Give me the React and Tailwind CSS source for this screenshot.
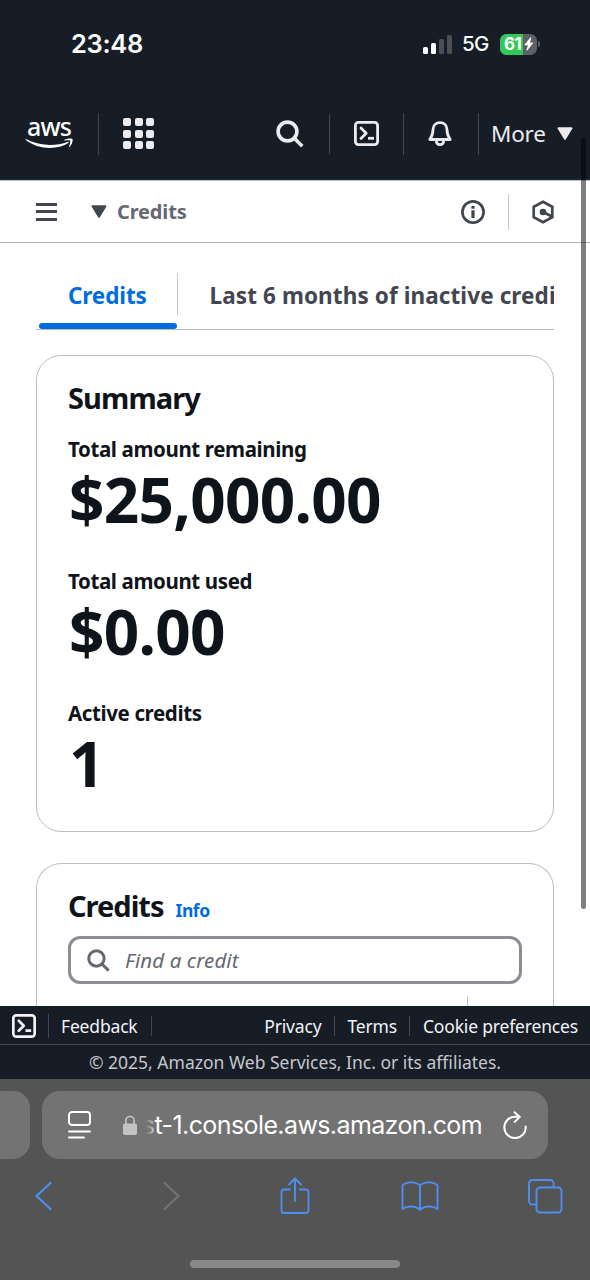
import { Fragment } from 'react'

const NAVY = 'bg-[#161d26]'

/* ---------- Icons ---------- */

function AwsLogo() {
  return (
    <div className="w-[48px] h-[36px] flex flex-col items-center text-white">
      <span className="font-['Noto_Sans'] font-medium text-[25px] leading-[20px] mb-[2px] tracking-[-0.9px]">aws</span>
      <svg viewBox="0 0 48 12" className="w-[48px] h-[12px] shrink-0" fill="currentColor">
        <path d="M.5 1.800C.1 1.300.7.9 1.400 1.300 14.200 8 30.500 8.600 42.600 4c1.100-.5 1.700.4.7 1.100C31.500 12.600 12.500 11.500.5 1.800z" />
        <path d="M39.300 1.900C41.500.5 46.500 0 47.400.9c.8 1.100-.3 5.900-2.700 7.900-.5.4-.9.200-.7-.4.7-1.600 1.600-4.900 1.100-5.600-.5-.7-3.500-.4-5.100-.2-.7.1-1.300-.3-.7-.7z" />
      </svg>
    </div>
  )
}

function AppsIcon() {
  return (
    <div className="grid grid-cols-3 gap-[3.5px] w-[31px]">
      {Array.from({ length: 9 }).map((_, i) => (
        <span key={i} className="size-[8px] rounded-[2px] bg-[#ebebf0]" />
      ))}
    </div>
  )
}

function SearchIcon({ className }) {
  return (
    <svg viewBox="0 0 28 28" className={className} fill="none" stroke="currentColor" strokeWidth="3.600">
      <circle cx="11.500" cy="11.500" r="9.400" />
      <path d="M18.300 18.300l8 8" />
    </svg>
  )
}

function TerminalIcon({ className }) {
  return (
    <svg viewBox="0 0 25 25" className={className} fill="none" stroke="currentColor" strokeWidth="2.800" strokeLinejoin="round">
      <rect x="1.400" y="1.400" width="22.200" height="22.200" rx="3" />
      <path d="M7 7l5.200 5.200L7 17.400" strokeLinecap="round" />
      <path d="M14 17.300h6" />
    </svg>
  )
}

function BellIcon() {
  return (
    <svg viewBox="0 0 24 26" className="w-[24px] h-[26px]" fill="none" stroke="currentColor" strokeWidth="2.800" strokeLinejoin="round">
      <path d="M12 1.700C7.800 1.700 5 4.800 5 8.800c0 4.700-1.200 7-3.200 9.700h20.400C20.200 15.800 19 13.500 19 8.800c0-4-2.800-7.100-7-7.100z" />
      <path d="M8.300 19c0 2.800 1.500 4.600 3.700 4.600s3.700-1.800 3.700-4.600" />
    </svg>
  )
}

function Caret({ className }) {
  return (
    <svg viewBox="0 0 16 13" className={className} fill="currentColor">
      <path d="M1.500.3h13c.9 0 1.300.8.8 1.500L8.900 12.200c-.4.700-1.400.7-1.800 0L.7 1.800C.2 1.100.6.3 1.500.3z" />
    </svg>
  )
}

function InfoIcon() {
  return (
    <svg viewBox="0 0 24 24" className="size-[24px]" fill="none" stroke="currentColor" strokeWidth="2.700">
      <circle cx="12" cy="12" r="10.600" />
      <path d="M12 10.300v7.600M12 5.900v2.800" strokeWidth="3.200" />
    </svg>
  )
}

function HexIcon() {
  return (
    <svg viewBox="0 0 22 24" className="w-[22px] h-[24px]" fill="none" stroke="currentColor" strokeWidth="2.700">
      <path d="M11 1.700l9.300 5.200v10.200L11 22.300l-9.300-5.200V6.900z" />
      <circle cx="11" cy="12" r="3.300" fill="currentColor" stroke="none" />
      <path d="M11 12l8.500 4.300" />
    </svg>
  )
}

function BatteryIcon() {
  return (
    <div className="flex items-center">
      <div className="relative w-[37px] h-[21px] rounded-[6.500px] overflow-hidden bg-[#5d6066]">
        <div className="w-[23px] h-full bg-[#34c759]" />
        <div className="absolute inset-0 flex items-center pl-[4px]">
          <span className="w-[20px] font-['Inter'] font-bold text-[17px] leading-[21px] tracking-[-0.5px] text-white">61</span>
          <svg viewBox="0 0 10 14" className="w-[10px] h-[14px]" fill="white">
            <path d="M6.400.4L.6 7.600c-.3.400-.1.700.3.700h3L2.500 13c-.2.700.3.900.7.400l6-7.300c.3-.4.1-.7-.3-.7H6L7.200.9c.2-.7-.4-1-.8-.5z" />
          </svg>
        </div>
      </div>
      <div className="ml-[1px] w-[2px] h-[6px] rounded-r-full bg-[#5d6066]" />
    </div>
  )
}

/* ---------- Page sections ---------- */

const BARS = ['h-[7px] bg-white', 'h-[11px] bg-white', 'h-[15px] bg-[#4a4f56]', 'h-[19px] bg-[#4a4f56]']

function StatusBar() {
  return (
    <div className="h-[88px] flex items-center pl-[71px] pr-[50px] text-white font-['Inter']">
      <span className="text-[25.500px] font-semibold tracking-[-0.3px] leading-[88px]">23:48</span>
      <div className="ml-auto flex items-center">
        <div className="flex items-end gap-[3px] h-[19px]">
          {BARS.map((bar) => (
            <span key={bar} className={`w-[5px] rounded-[1.500px] ${bar}`} />
          ))}
        </div>
        <span className="ml-[10px] w-[28px] text-[20.500px] font-medium tracking-[-0.6px]">5G</span>
        <div className="ml-[10px]"><BatteryIcon /></div>
      </div>
    </div>
  )
}

function Header() {
  return (
    <header className="h-[91px] flex items-center text-[#ebebf0] pl-[25px]">
      <AwsLogo />
      <i className="ml-[25px] w-px h-[42px] bg-[#424650]" />
      <div className="ml-[24px]"><AppsIcon /></div>
      <SearchIcon className="ml-[122px] size-[28px]" />
      <i className="ml-[25px] w-px h-[40px] bg-[#424650]" />
      <TerminalIcon className="ml-[24px] size-[25px]" />
      <i className="ml-[24px] w-px h-[42px] bg-[#424650]" />
      <div className="ml-[24px]"><BellIcon /></div>
      <i className="ml-[26px] w-px h-[42px] bg-[#424650]" />
      <span className="ml-[12px] w-[66px] text-[22.500px] tracking-[-0.2px]">More</span>
      <Caret className="w-[16px] h-[13px]" />
    </header>
  )
}

function Breadcrumb() {
  return (
    <nav className="h-[63px] shrink-0 flex items-center border-t border-t-[#b6bec9] border-b border-b-[#b0b0b6] pl-[36px] text-[#424650]">
      <div className="w-[21px] flex flex-col gap-[4.500px]">
        <i className="h-[3px] bg-[#424650]" />
        <i className="h-[3px] bg-[#424650]" />
        <i className="h-[3px] bg-[#424650]" />
      </div>
      <Caret className="ml-[34px] w-[16px] h-[13px]" />
      <span className="ml-[10px] w-[344px] text-[20px] font-bold tracking-[-0.15px] text-[#656871]">Credits</span>
      <InfoIcon />
      <i className="ml-[23px] w-px h-[36px] bg-[#c6c6cd]" />
      <div className="ml-[23px]"><HexIcon /></div>
    </nav>
  )
}

function Tabs() {
  return (
    <div className="mx-[36px] h-[87px] shrink-0 flex items-stretch border-b border-[#b8b8bf] overflow-hidden text-[22.500px] font-bold whitespace-nowrap">
      <div className="ml-[3px] w-[138px] shrink-0 flex flex-col">
        <span className="h-[80px] pl-[29px] pt-[35px] leading-[35px] tracking-[-0.1px] text-[#006ce0]">Credits</span>
        <i className="h-[6px] rounded-full bg-[#006ce0]" />
      </div>
      <i className="w-px h-[42px] mt-[30px] shrink-0 bg-[#c6c6cd]" />
      <span className="ml-[31.500px] pt-[35px] leading-[35px] tracking-[0.1px] text-[#424650]">Last 6 months of inactive credits</span>
    </div>
  )
}

const STATS = [
  { label: 'Total amount remaining', value: '$25,000.00' },
  { label: 'Total amount used', value: '$0.00' },
  { label: 'Active credits', value: '1' },
]

function Summary() {
  return (
    <section className="mx-[36px] mt-[25px] h-[477px] shrink-0 rounded-[25px] border border-[#bcbcc2] pl-[31px] pt-[23px] text-[#0f141a]">
      <h2 className="text-[29px] leading-[38px] font-bold tracking-[-0.9px]">Summary</h2>
      {STATS.map((s) => (
        <div key={s.label} className="h-[132px] pt-[17px]">
          <div className="text-[20.500px] leading-[30px] font-bold tracking-[-0.38px]">{s.label}</div>
          <div className="pl-px text-[62px] leading-[71px] font-bold tracking-[-0.7px]">{s.value}</div>
        </div>
      ))}
    </section>
  )
}

function CreditsTable() {
  return (
    <section className="mx-[36px] mt-[31px] h-[143px] shrink-0 rounded-t-[25px] border border-b-0 border-[#bcbcc2] px-[31px] pt-[23px]">
      <div className="flex items-baseline h-[49px]">
        <h2 className="text-[29px] leading-[38px] font-bold tracking-[-1px] text-[#0f141a]">Credits</h2>
        <a className="ml-[12px] text-[17.500px] font-bold tracking-[-0.4px] text-[#006ce0]">Info</a>
      </div>
      <div className="h-[48px] flex items-center rounded-[12px] border-[3px] border-[#8c8c94] pl-[16px] text-[#656871]">
        <SearchIcon className="size-[23px]" />
        <span className="ml-[15px] text-[20.500px] leading-[40px] italic tracking-[0.1px]">Find a credit</span>
      </div>
      <i className="block ml-auto mr-[54px] mt-[12px] w-px h-[10px] bg-[#bcbcc2]" />
    </section>
  )
}

const LINKS = ['Privacy', 'Terms', 'Cookie preferences']

function Footer() {
  return (
    <footer className={`${NAVY} h-[73px] shrink-0 text-[#f3f3f7]`}>
      <div className="h-[39px] flex items-center border-b border-[#424650] pt-[2px] pl-[12px] pr-[12px] text-[17.500px] tracking-[-0.17px]">
        <TerminalIcon className="size-[24px]" />
        <i className="ml-[12px] w-px h-[24px] bg-[#424650]" />
        <span className="ml-[12px] w-[90px]">Feedback</span>
        <i className="w-px h-[20px] bg-[#424650]" />
        <div className="ml-auto flex items-center">
          {LINKS.map((link, i) => (
            <Fragment key={link}>
              {i > 0 && <i className="mx-[12.500px] w-px h-[20px] bg-[#424650]" />}
              <span>{link}</span>
            </Fragment>
          ))}
        </div>
      </div>
      <p className="text-center text-[17.500px] leading-[34px] text-[#c6c6cd]">
        © 2025, Amazon Web Services, Inc. or its affiliates.
      </p>
    </footer>
  )
}

function AddressBar() {
  return (
    <div className="h-[68px] mt-[12px] flex">
      <div className="w-[30px] rounded-r-[17px] bg-[#737373]" />
      <div className="ml-[12px] w-[506px] rounded-[18px] bg-[#737373] flex items-center pl-[25px] text-white">
        <svg viewBox="0 0 25 28" className="w-[25px] h-[28px]" fill="none" stroke="currentColor" strokeWidth="1.900" strokeLinecap="round">
          <rect x="2" y="1" width="21" height="13" rx="3" />
          <path d="M2 20.500h21M2 26.500h15" />
        </svg>
        <svg viewBox="0 0 14 20" className="ml-[31px] w-[14px] h-[20px] text-[#c3c3c6]" fill="currentColor">
          <rect y="8.500" width="14" height="11.500" rx="2" />
          <path d="M3 9V5.500a4 4 0 0 1 8 0V9" fill="none" stroke="currentColor" strokeWidth="1.700" />
        </svg>
        <div className="w-[345px] pt-[2px] flex justify-end font-['Inter'] text-[25px] tracking-[-0.6px] whitespace-nowrap">
          {/* the host fades out on the left */}
          <span className="bg-linear-to-r from-transparent from-30% to-white/70 bg-clip-text text-transparent">s</span>
          <span>t-1.console.aws.amazon.com</span>
        </div>
        <svg viewBox="0 0 24 28" className="ml-[21px] w-[24px] h-[28px]" fill="none" stroke="currentColor" strokeWidth="2" strokeLinecap="round" strokeLinejoin="round">
          <path d="M22.700 15.500A10.700 10.700 0 1 1 12 5.700h4.500" />
          <path d="M11.500 1.200l5.200 4.700-5 5" />
        </svg>
      </div>
    </div>
  )
}

function Toolbar() {
  return (
    <div className="h-[74px] flex items-center pl-[34px] text-[#4d8ff0]">
      <svg viewBox="0 0 18 30" className="w-[18px] h-[30px]" fill="none" stroke="currentColor" strokeWidth="2.200" strokeLinecap="round">
        <path d="M16.500 2L2.500 15l14 13" />
      </svg>
      <svg viewBox="0 0 18 30" className="ml-[110px] w-[18px] h-[30px] text-[#747474]" fill="none" stroke="currentColor" strokeWidth="2.200" strokeLinecap="round">
        <path d="M2.500 2l14 13-14 13" />
      </svg>
      <svg viewBox="0 0 30 38" className="ml-[100px] w-[30px] h-[38px]" fill="none" stroke="currentColor" strokeWidth="1.900" strokeLinecap="round" strokeLinejoin="round">
        <path d="M10 12.500H4a2.500 2.500 0 0 0-2.500 2.500v18.500A2.500 2.500 0 0 0 4 36h22a2.500 2.500 0 0 0 2.500-2.500V15a2.500 2.500 0 0 0-2.500-2.500h-6" />
        <path d="M15 24V2M9 7.500L15 1.500l6 6" />
      </svg>
      <svg viewBox="0 0 38 30" className="ml-[91px] w-[38px] h-[30px]" fill="none" stroke="currentColor" strokeWidth="1.900" strokeLinejoin="round">
        <path d="M19 4.500C15.500.5 5.500.200 1.500 4.500v23.500c4.500-3.500 13-3.500 17.500.8 4.500-4.300 13-4.300 17.500-.8V4.500C32.500.2 22.500.5 19 4.500zM19 4.500v24" />
      </svg>
      <svg viewBox="0 0 36 36" className="ml-[88px] w-[36px] h-[36px]" fill="none" stroke="currentColor" strokeWidth="1.900">
        <path d="M9.500 26.500H5.500A3.500 3.500 0 0 1 2 23V5.500A3.500 3.500 0 0 1 5.500 2H23a3.500 3.500 0 0 1 3.500 3.500v4" />
        <rect x="9.500" y="9.500" width="25" height="25" rx="3.500" />
      </svg>
    </div>
  )
}

export default function App() {
  return (
    <div className="relative w-[590px] h-[1280px] overflow-hidden bg-white flex flex-col font-['Noto_Sans',sans-serif]">
      <div className={`${NAVY} h-[180px] shrink-0 border-b border-[#232b37]`}>
        <StatusBar />
        <Header />
      </div>
      <Breadcrumb />
      <Tabs />
      <Summary />
      <CreditsTable />
      <Footer />
      <div className="flex-1 flex flex-col bg-[#545454]">
        <AddressBar />
        <Toolbar />
        <i className="mt-auto mb-[12px] mx-auto w-[210px] h-[8px] rounded-full bg-[#888]" />
      </div>

      {/* page scroll indicator */}
      <div className="absolute left-[581px] top-[138px] w-[5px] h-[771px] rounded-full bg-black/50" />
    </div>
  )
}
